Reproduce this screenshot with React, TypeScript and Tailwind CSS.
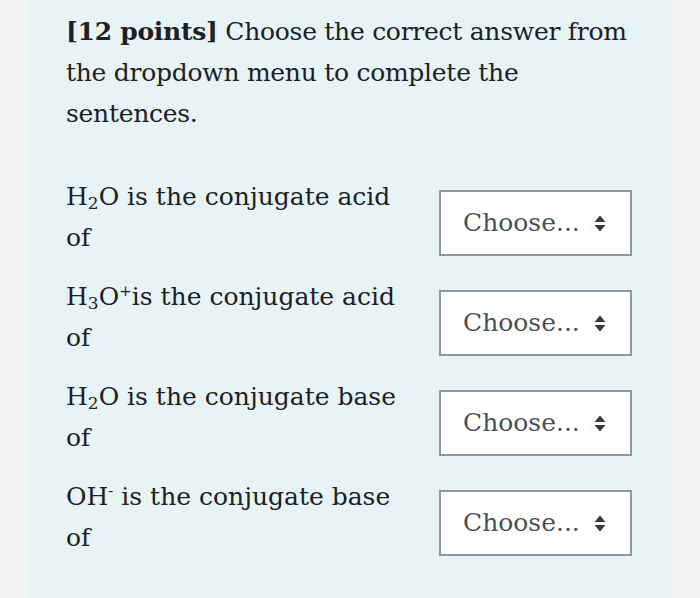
import React from 'react'

const Sub = ({ children }: { children: React.ReactNode }) => (
  <span className="relative top-[4px] text-[17px] leading-none">{children}</span>
)
const Sup = ({ children }: { children: React.ReactNode }) => (
  <span className="relative top-[-9px] text-[15px] leading-none">{children}</span>
)

const rows = [
  { label: <>H<Sub>2</Sub>O is the conjugate acid of</> },
  { label: <>H<Sub>3</Sub>O<Sup>+</Sup>is the conjugate acid of</> },
  { label: <>H<Sub>2</Sub>O is the conjugate base of</> },
  { label: <>OH<Sup>-</Sup> is the conjugate base of</> },
]

function SortArrows() {
  return (
    <svg width="12" height="17" viewBox="0 0 12 17" className="shrink-0">
      <path d="M6 0.5 L11.5 7 H0.5 Z" fill="#343a40" />
      <path d="M6 16.5 L11.5 10 H0.5 Z" fill="#343a40" />
    </svg>
  )
}

export default function App() {
  return (
    <div className="min-h-[598px] w-[700px] bg-[#f4f4f4] font-['DejaVu_Serif',serif] text-[#1d2125]">
      <div className="mx-[28px] min-h-[598px] bg-[#e7f3f5] pl-[38px] pr-[30px] pt-[11px]">
        <p className="text-[25px] leading-[41px] tracking-[-0.27px]">
          <span className="font-bold">[12 points]</span> Choose the correct answer from the dropdown menu to complete the sentences.
        </p>

        <div className="mt-[42px] flex flex-col gap-[18px]">
          {rows.map((r, i) => (
            <div key={i} className="flex items-start">
              <div className="w-[340px] text-[25px] leading-[41px]">{r.label}</div>
              <div className="ml-[33px] mt-[14px] flex h-[66px] w-[193px] items-center border-2 border-[#8f999d] bg-white pl-[22px] pr-[24px]">
                <span className="flex-1 text-[25px] text-[#495057]">Choose...</span>
                <SortArrows />
              </div>
            </div>
          ))}
        </div>
      </div>
    </div>
  )
}
